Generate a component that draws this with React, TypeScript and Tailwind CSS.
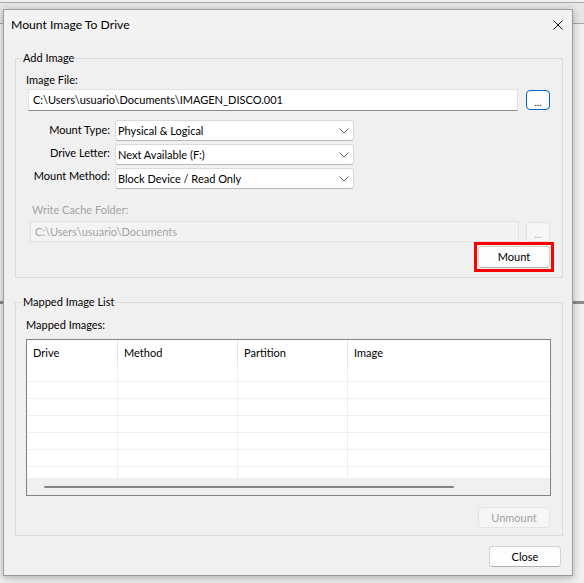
import React from "react";
import clsx from "clsx";

/**
 * "Mount Image To Drive" dialog, Windows 11 light style
 */

function Chevron() {
  return (
    <svg width="10" height="6" viewBox="0 0 10 6" className="shrink-0">
      <polyline
        points="0.5,0.5 5,5 9.5,0.5"
        fill="none"
        stroke="#5c5c5c"
        strokeWidth="1"
      />
    </svg>
  );
}

function Combo({ value }: { value: string }) {
  return (
    <div className="h-[21px] w-[239px] flex items-center justify-between bg-white border border-[#dadada] border-b-[#b8b8b8] rounded-[3px] pl-[2px] pr-[4px]">
      <span>{value}</span>
      <Chevron />
    </div>
  );
}

function WinButton({
  children,
  disabled = false,
  className = "",
}: {
  children: React.ReactNode;
  disabled?: boolean;
  className?: string;
}) {
  return (
    <div
      className={clsx(
        "h-[21px] w-[72px] flex items-center justify-center rounded-[4px] border",
        disabled
          ? "border-[#e4e4e4] bg-[#f6f6f6] text-[#a3a3a3]"
          : "border-[#d3d3d3] border-b-[#b0b0b0] bg-[#fdfdfd] text-black",
        className
      )}
    >
      {children}
    </div>
  );
}

function BrowseButton({ active = false }: { active?: boolean }) {
  return (
    <div
      className={clsx(
        "h-[20px] w-[24px] flex items-end justify-center rounded-[4px] pb-[1px] text-[10px] leading-[12px]",
        active
          ? "border-[1.5px] border-[#0067c0] bg-[#fdfdfd] text-black"
          : "border border-[#e4e4e4] bg-[#f6f6f6] text-[#a3a3a3]"
      )}
    >
      ...
    </div>
  );
}

const columns = [
  { label: "Drive", width: "w-[91px]" },
  { label: "Method", width: "w-[120px]" },
  { label: "Partition", width: "w-[110px]" },
  { label: "Image", width: "flex-1" },
];

function MappedTable() {
  const rows = [0, 1, 2, 3, 4, 5, 6];
  return (
    <div className="ml-[10px] mt-[6px] w-[525px] h-[157px] border border-[#838383] bg-white flex flex-col">
      <div className="h-[25px] flex shrink-0">
        {columns.map((col, i) => (
          <div
            key={col.label}
            className={clsx(
              "h-full flex items-center pl-[6px]",
              col.width,
              i < 3 && "border-r border-[#e5e5e5]"
            )}
          >
            {col.label}
          </div>
        ))}
      </div>
      <div className="h-[113px] overflow-hidden shrink-0">
        {rows.map((r) => (
          <div key={r} className="h-[17px] flex border-b border-[#efefef]">
            {columns.map((col, i) => (
              <div
                key={col.label}
                className={clsx(
                  "h-full",
                  col.width,
                  i < 3 && "border-r border-[#efefef]"
                )}
              />
            ))}
          </div>
        ))}
      </div>
      <div className="h-[17px] bg-[#f0f0f0] flex items-center pl-[17px] shrink-0">
        <div className="h-[2px] w-[410px] bg-[#858585] rounded-full" />
      </div>
    </div>
  );
}

export default function App() {
  return (
    <div className="relative w-[584px] h-[583px] overflow-hidden bg-[#f0f0f0] font-['Lato',sans-serif] text-[11px] leading-[16px] text-black">
      {/* parent window behind the dialog */}
      <div className="absolute left-0 top-[2px] w-full h-[22px] bg-[#e6e6e6] border-t border-b border-[#a9a9a9]" />
      <div className="absolute left-0 top-[301px] w-full h-[3px] bg-[#8c8c8c]" />

      <div className="relative ml-[3px] mt-[9px] w-[570px] h-[567px] border border-[#9b9b9b] bg-[#f0f0f0] shadow-[0_2px_8px_rgba(0,0,0,0.28)] flex flex-col">
        {/* title bar */}
        <div className="h-[30px] shrink-0 bg-[#f3f3f3] flex items-center justify-between pl-[7px] pr-[9px]">
          <span className="text-[12.2px]">Mount Image To Drive</span>
          <svg width="10" height="10" viewBox="0 0 10 10">
            <path d="M0.5 0.5 L9.5 9.5 M9.5 0.5 L0.5 9.5" stroke="#1b1b1b" strokeWidth="1" />
          </svg>
        </div>

        {/* body */}
        <div className="flex-1 flex flex-col">
          <fieldset className="mt-[10px] ml-[11px] mr-[9px] min-w-0 border border-[#dcdcdc] pb-[5px] flex flex-col">
            <legend className="ml-[6px] px-[1px]">Add Image</legend>
            <div className="mt-[6px] ml-[10px]">Image File:</div>
            <div className="mt-[1px] flex items-center">
              <div className="ml-[12px] w-[490px] h-[22px] bg-white border border-[#e0e0e0] border-b-[#8a8a8a] flex items-center pl-[4px]">
                C:\Users\usuario\Documents\IMAGEN_DISCO.001
              </div>
              <div className="ml-[8px]">
                <BrowseButton active />
              </div>
            </div>

            <div className="mt-[9px] flex flex-col gap-[3px]">
              <div className="flex items-start">
                <div className="w-[94px] text-right pt-[2px]">Mount Type:</div>
                <div className="ml-[5px]">
                  <Combo value="Physical & Logical" />
                </div>
              </div>
              <div className="flex items-start">
                <div className="w-[94px] text-right pt-[1px]">Drive Letter:</div>
                <div className="ml-[5px]">
                  <Combo value="Next Available (F:)" />
                </div>
              </div>
              <div className="flex items-start">
                <div className="w-[94px] text-right">Mount Method:</div>
                <div className="ml-[5px]">
                  <Combo value="Block Device / Read Only" />
                </div>
              </div>
            </div>

            <div className="mt-[13px] ml-[16px] text-[#a3a3a3]">Write Cache Folder:</div>
            <div className="mt-[3px] flex items-center">
              <div className="ml-[14px] w-[489px] h-[21px] bg-[#f3f3f3] border border-[#e2e2e2] text-[#a3a3a3] flex items-center pl-[4px]">
                C:\Users\usuario\Documents
              </div>
              <div className="ml-[7px]">
                <BrowseButton />
              </div>
            </div>

            <div className="self-end mr-[8px] border-[3px] border-[#fe0000] p-[1px]">
              <WinButton className="h-[22px]">Mount</WinButton>
            </div>
          </fieldset>

          <fieldset className="mt-[16px] ml-[11px] mr-[9px] min-w-0 border border-[#dcdcdc] pb-[7px] flex flex-col">
            <legend className="ml-[6px] px-[1px]">Mapped Image List</legend>
            <div className="mt-[7px] ml-[10px]">Mapped Images:</div>
            <MappedTable />
            <div className="mt-[11px] self-end mr-[12px]">
              <WinButton disabled>Unmount</WinButton>
            </div>
          </fieldset>

          <div className="mt-[10px] self-end mr-[11px]">
            <WinButton>Close</WinButton>
          </div>
        </div>
      </div>
    </div>
  );
}
